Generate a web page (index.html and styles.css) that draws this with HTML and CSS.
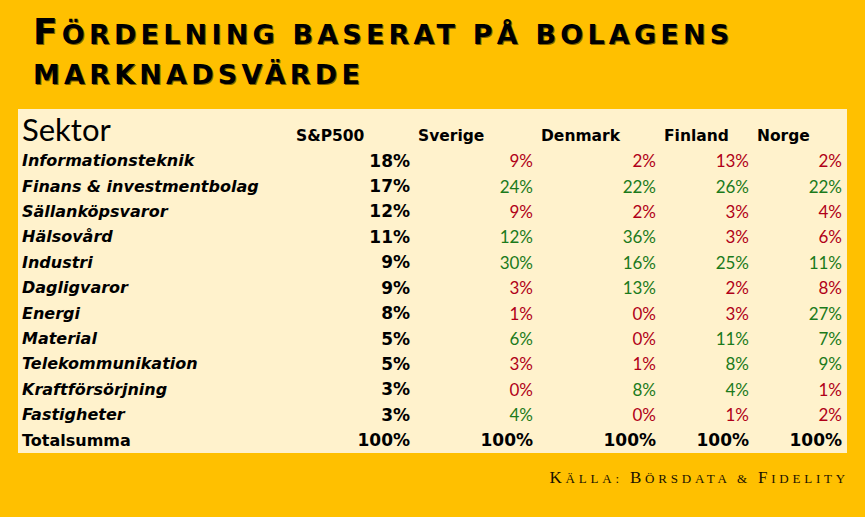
FILE: index.html
```html
<!DOCTYPE html>
<html lang="sv">
<head>
<meta charset="utf-8">
<title>Fördelning baserat på bolagens marknadsvärde</title>
<link rel="stylesheet" href="styles.css">
</head>
<body>
<div class="slide">
  <h1 class="title"><span class="cap">F</span>ördelning baserat på bolagens<br>marknadsvärde</h1>
  <div class="panel">
    <div class="row head">
      <div class="c label sektor">Sektor</div>
      <div class="c h">S&amp;P500</div>
      <div class="c h">Sverige</div>
      <div class="c h">Denmark</div>
      <div class="c h">Finland</div>
      <div class="c h">Norge</div>
    </div>
    <div class="row"><div class="c label">Informationsteknik</div><div class="c sp">18%</div><div class="c v r">9%</div><div class="c v r">2%</div><div class="c v r">13%</div><div class="c v r">2%</div></div>
    <div class="row"><div class="c label">Finans &amp; investmentbolag</div><div class="c sp">17%</div><div class="c v g">24%</div><div class="c v g">22%</div><div class="c v g">26%</div><div class="c v g">22%</div></div>
    <div class="row"><div class="c label">Sällanköpsvaror</div><div class="c sp">12%</div><div class="c v r">9%</div><div class="c v r">2%</div><div class="c v r">3%</div><div class="c v r">4%</div></div>
    <div class="row"><div class="c label">Hälsovård</div><div class="c sp">11%</div><div class="c v g">12%</div><div class="c v g">36%</div><div class="c v r">3%</div><div class="c v r">6%</div></div>
    <div class="row"><div class="c label">Industri</div><div class="c sp">9%</div><div class="c v g">30%</div><div class="c v g">16%</div><div class="c v g">25%</div><div class="c v g">11%</div></div>
    <div class="row"><div class="c label">Dagligvaror</div><div class="c sp">9%</div><div class="c v r">3%</div><div class="c v g">13%</div><div class="c v r">2%</div><div class="c v r">8%</div></div>
    <div class="row"><div class="c label">Energi</div><div class="c sp">8%</div><div class="c v r">1%</div><div class="c v r">0%</div><div class="c v r">3%</div><div class="c v g">27%</div></div>
    <div class="row"><div class="c label">Material</div><div class="c sp">5%</div><div class="c v g">6%</div><div class="c v r">0%</div><div class="c v g">11%</div><div class="c v g">7%</div></div>
    <div class="row"><div class="c label">Telekommunikation</div><div class="c sp">5%</div><div class="c v r">3%</div><div class="c v r">1%</div><div class="c v g">8%</div><div class="c v g">9%</div></div>
    <div class="row"><div class="c label">Kraftförsörjning</div><div class="c sp">3%</div><div class="c v r">0%</div><div class="c v g">8%</div><div class="c v g">4%</div><div class="c v r">1%</div></div>
    <div class="row"><div class="c label">Fastigheter</div><div class="c sp">3%</div><div class="c v g">4%</div><div class="c v r">0%</div><div class="c v r">1%</div><div class="c v r">2%</div></div>
    <div class="row total"><div class="c label">Totalsumma</div><div class="c sp">100%</div><div class="c sp">100%</div><div class="c sp">100%</div><div class="c sp">100%</div><div class="c sp">100%</div></div>
  </div>
  <p class="source"><span class="scap">K</span>älla: <span class="scap">B</span>örsdata &amp; <span class="scap">F</span>idelity</p>
</div>
</body>
</html>
```
FILE: styles.css
```css
html, body {
  margin: 0;
  padding: 0;
}
body {
  background: #FFC000;
  width: 865px;
  height: 517px;
  overflow: hidden;
}
.slide {
  display: flex;
  flex-direction: column;
  padding-top: 12px;
}
.title {
  margin: 0 0 0 33px;
  font-family: "DejaVu Sans", sans-serif;
  font-weight: bold;
  text-transform: uppercase;
  font-size: 27px;
  line-height: 40px;
  letter-spacing: 4.2px;
  color: #000;
  text-shadow: 1px 1px 0 #806000;
}
.title .cap {
  font-size: 36px;
  line-height: 40px;
}
.panel {
  margin: 14px 0 0 18px;
  width: 829px;
  height: 344px;
  background: #FFF2CC;
  display: flex;
  flex-direction: column;
}
.row {
  display: grid;
  grid-template-columns: 275px 122px 123px 123px 93px 93px;
  height: 25.5px;
  align-items: center;
}
.row.head {
  height: 39px;
  align-items: baseline;
  padding-top: 3px;
  box-sizing: border-box;
}
.c {
  white-space: nowrap;
}
.label {
  padding-left: 4px;
  font-family: "DejaVu Sans", sans-serif;
  font-weight: bold;
  font-style: italic;
  font-size: 16px;
  color: #000;
}
.total .label {
  font-style: normal;
}
.sektor {
  font-family: Lato, sans-serif;
  font-style: normal;
  font-weight: normal;
  font-size: 31px;
  line-height: 34px;
}
.h {
  font-family: "DejaVu Sans", sans-serif;
  font-weight: bold;
  font-size: 15.5px;
  padding-left: 3px;
}
.sp {
  text-align: right;
  padding-right: 5px;
  font-family: "DejaVu Sans", sans-serif;
  font-weight: bold;
  font-size: 17px;
}
.v {
  text-align: right;
  padding-right: 5px;
  font-family: Lato, sans-serif;
  font-size: 17px;
}
.r { color: #B00018; }
.g { color: #1B7A1B; }
.source {
  margin: 15px 16px 0 0;
  text-align: right;
  font-family: "Liberation Serif", serif;
  text-transform: uppercase;
  font-size: 13px;
  line-height: 20px;
  letter-spacing: 3.8px;
  color: #1a1200;
}
.source .scap {
  font-size: 17px;
}
```
